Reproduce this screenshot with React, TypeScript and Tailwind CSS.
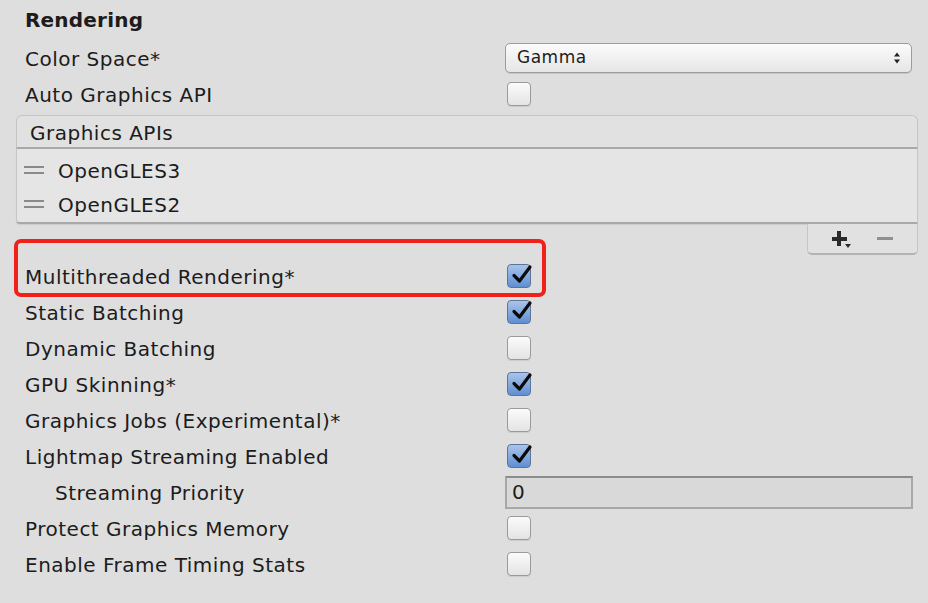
import React from "react";

type Row = { label: string; kind: "check" | "empty" | "input"; indent?: boolean };

const rows: Row[] = [
  { label: "Static Batching", kind: "check" },
  { label: "Dynamic Batching", kind: "empty" },
  { label: "GPU Skinning*", kind: "check" },
  { label: "Graphics Jobs (Experimental)*", kind: "empty" },
  { label: "Lightmap Streaming Enabled", kind: "check" },
  { label: "Streaming Priority", kind: "input", indent: true },
  { label: "Protect Graphics Memory", kind: "empty" },
  { label: "Enable Frame Timing Stats", kind: "empty" },
];

function Checkbox({ checked }: { checked: boolean }) {
  if (!checked) {
    return (
      <div className="ml-[2px] h-[24px] w-[24px] rounded-[4px] border border-[#9a9a9a] bg-gradient-to-b from-[#fbfbfb] to-[#e4e4e4] shadow-[0_1px_0_rgba(0,0,0,0.08)]" />
    );
  }
  return (
    <div className="relative ml-[2px] h-[24px] w-[24px] rounded-[4px] border border-[#5f7597] bg-gradient-to-b from-[#a9c4ea] to-[#5f8fd3]">
      <svg
        viewBox="0 0 24 24"
        className="absolute left-[2px] top-[-3px] h-[24px] w-[24px]"
      >
        <path
          d="M4 13.5 L9.5 19 L20 5"
          fill="none"
          stroke="#0b0b0b"
          strokeWidth="3.2"
          strokeLinecap="round"
          strokeLinejoin="round"
        />
      </svg>
    </div>
  );
}

function Handle() {
  return (
    <div className="flex w-[20px] flex-col gap-[4px]">
      <div className="h-[2px] bg-[#8a8a8a]" />
      <div className="h-[2px] bg-[#8a8a8a]" />
    </div>
  );
}

export default function App() {
  return (
    <div
      className="h-[603px] w-[928px] overflow-hidden bg-[#dedede] pl-[25px] text-[20px] tracking-[0.5px] text-[#1c1c1c]"
      style={{ fontFamily: '"DejaVu Sans", "Liberation Sans", sans-serif' }}
    >
      <div className="flex h-[40px] items-center font-bold tracking-[0.2px]">Rendering</div>

      <div className="flex h-[36px] items-center">
        <div className="w-[480px] pt-[2px]">Color Space*</div>
        <div className="flex h-[30px] w-[407px] items-center justify-between rounded-[5px] border border-[#9c9c9c] bg-gradient-to-b from-[#fbfbfb] to-[#e6e6e6] pl-[11px] pr-[10px] text-[17px] shadow-[0_1px_0_rgba(0,0,0,0.1)]">
          <span>Gamma</span>
          <svg viewBox="0 0 8 14" className="h-[14px] w-[8px]">
            <path d="M1 5.5 L4 1.5 L7 5.5 Z M1 8.5 L4 12.5 L7 8.5 Z" fill="#222" />
          </svg>
        </div>
      </div>

      <div className="flex h-[36px] items-center">
        <div className="w-[480px] pt-[2px]">Auto Graphics API</div>
        <Checkbox checked={false} />
      </div>

      <div className="-ml-[9px] mt-[3px] w-[902px]">
        <div className="flex h-[34px] items-center rounded-t-[6px] border border-b-2 border-[#c4c4c4] border-b-[#a9a9a9] bg-[#e1e1e1] pl-[13px] pt-[2px]">
          Graphics APIs
        </div>
        <div className="rounded-bl-[4px] border-x border-b-2 border-[#c6c6c6] border-b-[#a9a9a9] bg-[#e5e5e5] pb-[1px] pt-[4px] shadow-[0_1px_1px_rgba(0,0,0,0.08)]">
          <div className="flex h-[34px] items-center gap-[14px] pl-[7px]">
            <Handle />
            <span className="pt-[2px]">OpenGLES3</span>
          </div>
          <div className="flex h-[34px] items-center gap-[14px] pl-[7px]">
            <Handle />
            <span className="pt-[2px]">OpenGLES2</span>
          </div>
        </div>
        <div className="flex justify-end">
          <div className="flex h-[31px] w-[111px] items-center rounded-b-[5px] border-x border-b-2 border-[#c6c6c6] border-b-[#b3b3b3] bg-[#e1e1e1]">
            <div className="relative ml-[21px] flex h-[20px] w-[20px] items-center justify-center">
              <div className="absolute h-[4px] w-[15px] bg-[#2a2a2a]" />
              <div className="absolute h-[15px] w-[4px] bg-[#2a2a2a]" />
              <svg viewBox="0 0 6 4" className="absolute left-[16px] top-[15px] h-[4px] w-[6px]">
                <path d="M0 0 L6 0 L3 4 Z" fill="#2a2a2a" />
              </svg>
            </div>
            <div className="ml-[28px] h-[3px] w-[16px] bg-[#8f8f8f]" />
          </div>
        </div>
      </div>

      <div className="relative mt-[3px] flex h-[36px] items-center">
        <div className="absolute left-[-11px] top-[-19px] h-[58px] w-[532px] rounded-[7px] border-[4px] border-[#f0211a]" />
        <div className="w-[480px] pt-[2px]">Multithreaded Rendering*</div>
        <Checkbox checked={true} />
      </div>

      {rows.map((r) => (
        <div key={r.label} className="flex h-[36px] items-center">
          <div className={r.indent ? "w-[480px] pl-[30px] pt-[2px]" : "w-[480px] pt-[2px]"}>{r.label}</div>
          {r.kind === "input" ? (
            <div className="flex h-[33px] w-[408px] items-center border-2 border-[#a8a8a8] border-t-[#8c8c8c] bg-[#d9d9d9] pl-[5px]">
              0
            </div>
          ) : (
            <Checkbox checked={r.kind === "check"} />
          )}
        </div>
      ))}
    </div>
  );
}
